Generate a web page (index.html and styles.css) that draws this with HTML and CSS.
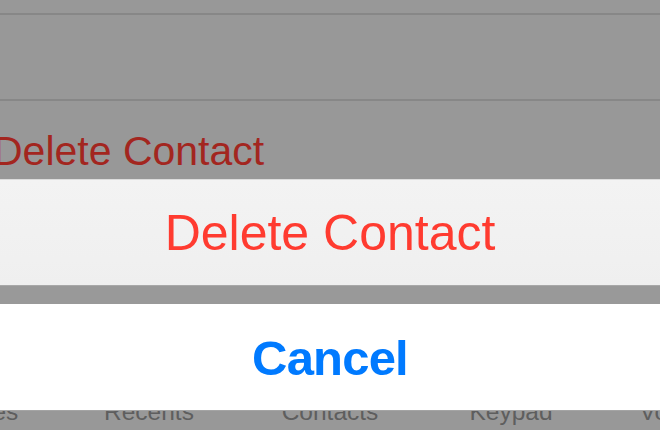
FILE: index.html
```html
<!DOCTYPE html>
<html lang="en">
<head>
<meta charset="utf-8">
<title>Delete Contact</title>
<link rel="stylesheet" href="styles.css">
</head>
<body>
<div class="screen">
  <div class="list">
    <div class="row row-top"></div>
    <div class="row row-mid"></div>
    <div class="row row-delete">Delete Contact</div>
  </div>
  <div class="sheet">
    <div class="sheet-btn sheet-destructive">Delete Contact</div>
    <div class="sheet-gap"></div>
    <div class="sheet-btn sheet-cancel">Cancel</div>
  </div>
  <div class="tabbar">
    <div class="tab"><span class="tab-label">Favorites</span></div>
    <div class="tab"><span class="tab-label">Recents</span></div>
    <div class="tab"><span class="tab-label">Contacts</span></div>
    <div class="tab"><span class="tab-label">Keypad</span></div>
    <div class="tab"><span class="tab-label">Voicemail</span></div>
  </div>
</div>
</body>
</html>
```
FILE: styles.css
```css
html, body {
  margin: 0;
  padding: 0;
  background: #989898;
}
body {
  font-family: "Liberation Sans", Arial, sans-serif;
  width: 660px;
  height: 430px;
  overflow: hidden;
}
.screen {
  width: 660px;
  height: 430px;
  overflow: hidden;
  display: flex;
  flex-direction: column;
  background: #989898;
}
.list {
  display: flex;
  flex-direction: column;
}
.row {
  box-sizing: border-box;
  background: #989898;
}
.row-top {
  height: 15px;
  border-bottom: 2px solid #878787;
}
.row-mid {
  height: 86px;
  border-bottom: 2px solid #878787;
}
.row-delete {
  height: 78px;
  padding-top: 30px;
  font-size: 41px;
  line-height: 41px;
  color: #a3261f;
  text-indent: -7px;
  white-space: nowrap;
  overflow: hidden;
}
.sheet {
  display: flex;
  flex-direction: column;
}
.sheet-btn {
  box-sizing: border-box;
  height: 106px;
  text-align: center;
  white-space: nowrap;
}
.sheet-destructive {
  background: linear-gradient(#f3f3f3, #efefef);
  border-top: 1px solid #dcdcdc;
  color: #ff3b30;
  font-size: 50px;
  line-height: 105px;
  padding-top: 1px;
}
.sheet-gap {
  height: 19px;
  background: #999999;
  border-top: 1px solid #a8a8a8;
  box-sizing: border-box;
}
.sheet-cancel {
  background: #ffffff;
  color: #007aff;
  font-size: 49px;
  font-weight: bold;
  line-height: 106px;
  padding-top: 1px;
  letter-spacing: -0.8px;
}
.tabbar {
  height: 20px;
  overflow: hidden;
  display: flex;
  justify-content: center;
  background: #989898;
  border-top: 1px solid #a4a4a4;
  box-sizing: border-box;
}
.tab {
  flex: 0 0 181px;
  text-align: center;
  white-space: nowrap;
}
.tab-label {
  display: block;
  font-size: 24.5px;
  line-height: 24.5px;
  margin-top: -11px;
  color: #5e5e5e;
}
```
